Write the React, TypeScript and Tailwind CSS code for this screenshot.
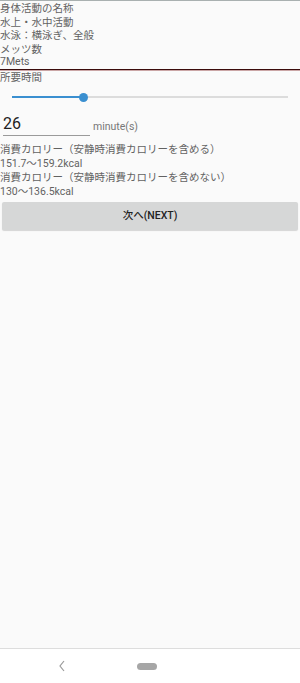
// App.tsx
// Pantalla de actividad física — nombre, METs, tiempo y calorías.

const font = { fontFamily: "Roboto, 'Noto Sans CJK JP', 'Noto Sans', sans-serif" };

export default function App() {
  const value = 26;
  const pct = 26; // posición del slider en %

  return (
    <div className="w-[300px] h-[683px] flex flex-col bg-[#fafafa] text-[#626262]" style={font}>
      {/* borde superior */}
      <div className="h-px bg-[#a9b0b0]" />

      {/* Info */}
      <div className="text-[10.5px] leading-[13.5px] pt-[1px]">
        <p>身体活動の名称</p>
        <p>水上・水中活動</p>
        <p>水泳：横泳ぎ、全般</p>
        <p>メッツ数</p>
        <p className="leading-[12px]">7Mets</p>
      </div>
      <div className="mt-[1px] h-px bg-[#3a0b0b]" />
      <div className="h-px bg-[#caa5a5]" />

      {/* Tiempo */}
      <p className="text-[10.5px] leading-[13.5px]">所要時間</p>
      <div className="relative mx-[12px] mt-[8.5px] h-[8px]">
        <div className="absolute left-0 right-0 top-[3px] h-[2px] bg-[#dcdcdc]" />
        <div className="absolute left-0 top-[3px] h-[2px] bg-[#3a8fd0]" style={{ width: `${pct}%` }} />
        <div
          className="absolute top-0 w-[9px] h-[9px] -ml-[4.5px] -mt-[0.5px] rounded-full bg-[#3a8fd0]"
          style={{ left: `${pct}%` }}
        />
      </div>

      <div className="flex items-end mt-[13px]">
        <div className="ml-[3px] w-[87px] border-b border-[#9a9a9a] pb-[1px] text-[16px] leading-[20px] text-[#222222]">
          {value}
        </div>
        <span className="ml-[3px] mb-[2px] text-[10.5px] leading-[14px] text-[#777777]">minute(s)</span>
      </div>

      {/* Calorías */}
      <div className="text-[10.5px] leading-[14px] mt-[7px]">
        <p>消費カロリー（安静時消費カロリーを含める）</p>
        <p>151.7〜159.2kcal</p>
        <p>消費カロリー（安静時消費カロリーを含めない）</p>
        <p>130〜136.5kcal</p>
      </div>

      <button className="mx-[2px] mt-[3px] h-[28px] rounded-[2px] bg-[#d6d7d7] shadow-[0_1px_1px_rgba(0,0,0,0.15)] text-[10.5px] font-medium text-[#222222]">
        次へ(NEXT)
      </button>

      <div className="flex-1" />

      {/* Barra de navegación */}
      <div className="h-[35px] bg-white border-t border-[#dddddd] flex items-center">
        <svg width="8" height="12" viewBox="0 0 8 12" className="ml-[58px]">
          <path d="M6 1 L2 6 L6 11" fill="none" stroke="#9a9a9a" strokeWidth="1.2" />
        </svg>
        <div className="ml-[71px] w-[20px] h-[7px] rounded-full bg-[#a6a6a6]" />
      </div>
    </div>
  );
}
